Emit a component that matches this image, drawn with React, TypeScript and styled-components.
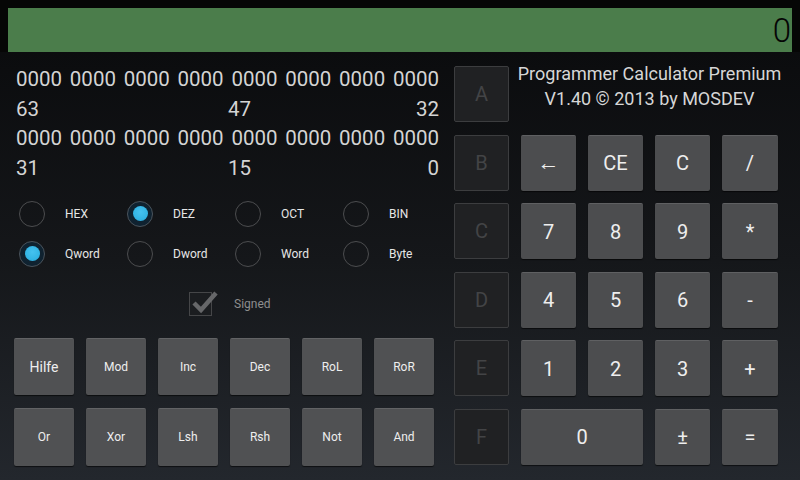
import React from "react";
import styled, { createGlobalStyle } from "styled-components";

const Global = createGlobalStyle`
  html, body { margin: 0; padding: 0; background: #000; }
  #root { width: 800px; height: 480px; }
  * { box-sizing: border-box; }
`;

const Screen = styled.div`
  width: 800px;
  height: 480px;
  display: flex;
  flex-direction: column;
  font-family: Roboto, "Liberation Sans", sans-serif;
  background: linear-gradient(to bottom, #0a0b0c 0px, #0b0c0e 52px, #15171a 260px, #23272d 480px);
  overflow: hidden;
`;

const DisplayWrap = styled.div`
  background: #060606;
  padding: 8px 8px 0 8px;
`;

const Display = styled.div`
  height: 44px;
  background: #4b7d4b;
  color: #050505;
  font-size: 33px;
  font-weight: 300;
  display: flex;
  align-items: center;
  justify-content: flex-end;
  padding-right: 1px;
  line-height: 1;
`;

const Main = styled.div`
  flex: 1;
  display: flex;
`;

const Left = styled.div`
  width: 454px;
  display: flex;
  flex-direction: column;
`;

const Binary = styled.div`
  margin: 13px 0 0 16px;
  width: 423px;
  color: #d4d4d4;
  font-size: 20.5px;
  line-height: 29.7px;
`;

const BitsLine = styled.div`
  display: flex;
  justify-content: space-between;
`;

const LabelLine = styled.div`
  display: grid;
  grid-template-columns: 212px 1fr;
`;

const LabelRight = styled.div`
  display: flex;
  justify-content: space-between;
`;

const RadioGrid = styled.div`
  margin: 10px 0 0 19px;
  display: grid;
  grid-template-columns: repeat(4, 108px);
  grid-auto-rows: 40px;
`;

const RadioItem = styled.div`
  display: flex;
  align-items: center;
  gap: 20px;
  color: #e6e6e6;
  font-size: 12px;
`;

const RadioCircle = styled.div<{ $on?: boolean }>`
  width: 26px;
  height: 26px;
  border-radius: 50%;
  border: 1.5px solid ${(p) => (p.$on ? "#4a535b" : "#4c4d4f")};
  background: ${(p) => (p.$on ? "#0f2230" : "transparent")};
  display: flex;
  align-items: center;
  justify-content: center;
`;

const RadioDot = styled.div`
  width: 15px;
  height: 15px;
  border-radius: 50%;
  background: radial-gradient(circle at 50% 40%, #45c2f0 0%, #33b5e5 60%, #2a9fcc 100%);
`;

const CheckRow = styled.div`
  margin: 13px 0 0 189px;
  height: 34px;
  display: flex;
  align-items: center;
  gap: 22px;
  color: #8e8e8e;
  font-size: 12px;
`;

const CheckBox = styled.div`
  position: relative;
  width: 23px;
  height: 24px;
  border: 1px solid #454648;
  background: #1b1d20;
`;

const CheckMark = styled.svg`
  position: absolute;
  left: 1px;
  top: -6px;
`;

const FuncGrid = styled.div`
  margin: 17px 0 0 14px;
  display: grid;
  grid-template-columns: repeat(6, 60px);
  grid-template-rows: 57px 58px;
  column-gap: 12px;
  row-gap: 13px;
`;

const Key = styled.div<{ $size?: number; $span?: number }>`
  grid-column: span ${(p) => p.$span ?? 1};
  background: #4c4d4f;
  border-top: 1px solid #5f6062;
  border-radius: 2px;
  box-shadow: 0 1px 1px rgba(0, 0, 0, 0.6);
  color: #eeeeee;
  font-size: ${(p) => p.$size ?? 20}px;
  display: flex;
  align-items: center;
  justify-content: center;
  user-select: none;
`;

const FuncKey = styled(Key)`
  background: #505153;
  border-top-color: #626365;
`;

const HexKey = styled.div`
  background: #202123;
  border: 1px solid #3c3d3f;
  border-radius: 2px;
  color: #434446;
  font-size: 20px;
  display: flex;
  align-items: center;
  justify-content: center;
`;

const Right = styled.div`
  margin-top: 14px;
  display: grid;
  grid-template-columns: 55px 55px 55px 55px 56px;
  grid-template-rows: repeat(6, 56px);
  column-gap: 12px;
  row-gap: 12.6px;
`;

const Title = styled.div`
  grid-column: span 4;
  display: flex;
  flex-direction: column;
  align-items: center;
  color: #d6d6d6;
  font-size: 18px;
  line-height: 25px;
  margin-top: -5px;
  white-space: nowrap;
`;

const bases = ["HEX", "DEZ", "OCT", "BIN"];
const sizes = ["Qword", "Dword", "Word", "Byte"];
const funcs1 = ["Mod", "Inc", "Dec", "RoL", "RoR"];
const funcs2 = ["Or", "Xor", "Lsh", "Rsh", "Not", "And"];

const Bits = () => (
  <BitsLine>
    {Array.from({ length: 8 }).map((_, i) => (
      <span key={i}>0000</span>
    ))}
  </BitsLine>
);

export default function App() {
  return (
    <>
      <Global />
      <Screen>
        <DisplayWrap>
          <Display>0</Display>
        </DisplayWrap>
        <Main>
          <Left>
            <Binary>
              <Bits />
              <LabelLine>
                <span>63</span>
                <LabelRight>
                  <span>47</span>
                  <span>32</span>
                </LabelRight>
              </LabelLine>
              <Bits />
              <LabelLine>
                <span>31</span>
                <LabelRight>
                  <span>15</span>
                  <span>0</span>
                </LabelRight>
              </LabelLine>
            </Binary>
            <RadioGrid>
              {bases.map((b) => (
                <RadioItem key={b}>
                  <RadioCircle $on={b === "DEZ"}>{b === "DEZ" && <RadioDot />}</RadioCircle>
                  {b}
                </RadioItem>
              ))}
              {sizes.map((s) => (
                <RadioItem key={s}>
                  <RadioCircle $on={s === "Qword"}>{s === "Qword" && <RadioDot />}</RadioCircle>
                  {s}
                </RadioItem>
              ))}
            </RadioGrid>
            <CheckRow>
              <CheckBox>
                <CheckMark width="28" height="28" viewBox="0 0 28 28">
                  <path d="M3 16 L10 23 L25 6" fill="none" stroke="#666769" strokeWidth="4.5" strokeLinejoin="miter" />
                </CheckMark>
              </CheckBox>
              Signed
            </CheckRow>
            <FuncGrid>
              <FuncKey $size={14}>Hilfe</FuncKey>
              {funcs1.map((f) => (
                <FuncKey key={f} $size={12}>
                  {f}
                </FuncKey>
              ))}
              {funcs2.map((f) => (
                <FuncKey key={f} $size={12}>
                  {f}
                </FuncKey>
              ))}
            </FuncGrid>
          </Left>
          <Right>
            <HexKey>A</HexKey>
            <Title>
              <span>Programmer Calculator Premium</span>
              <span>V1.40 © 2013 by MOSDEV</span>
            </Title>
            <HexKey>B</HexKey>
            <Key $size={22}>←</Key>
            <Key>CE</Key>
            <Key>C</Key>
            <Key>/</Key>
            <HexKey>C</HexKey>
            <Key>7</Key>
            <Key>8</Key>
            <Key>9</Key>
            <Key>*</Key>
            <HexKey>D</HexKey>
            <Key>4</Key>
            <Key>5</Key>
            <Key>6</Key>
            <Key>-</Key>
            <HexKey>E</HexKey>
            <Key>1</Key>
            <Key>2</Key>
            <Key>3</Key>
            <Key>+</Key>
            <HexKey>F</HexKey>
            <Key $span={2}>0</Key>
            <Key>±</Key>
            <Key>=</Key>
          </Right>
        </Main>
      </Screen>
    </>
  );
}
